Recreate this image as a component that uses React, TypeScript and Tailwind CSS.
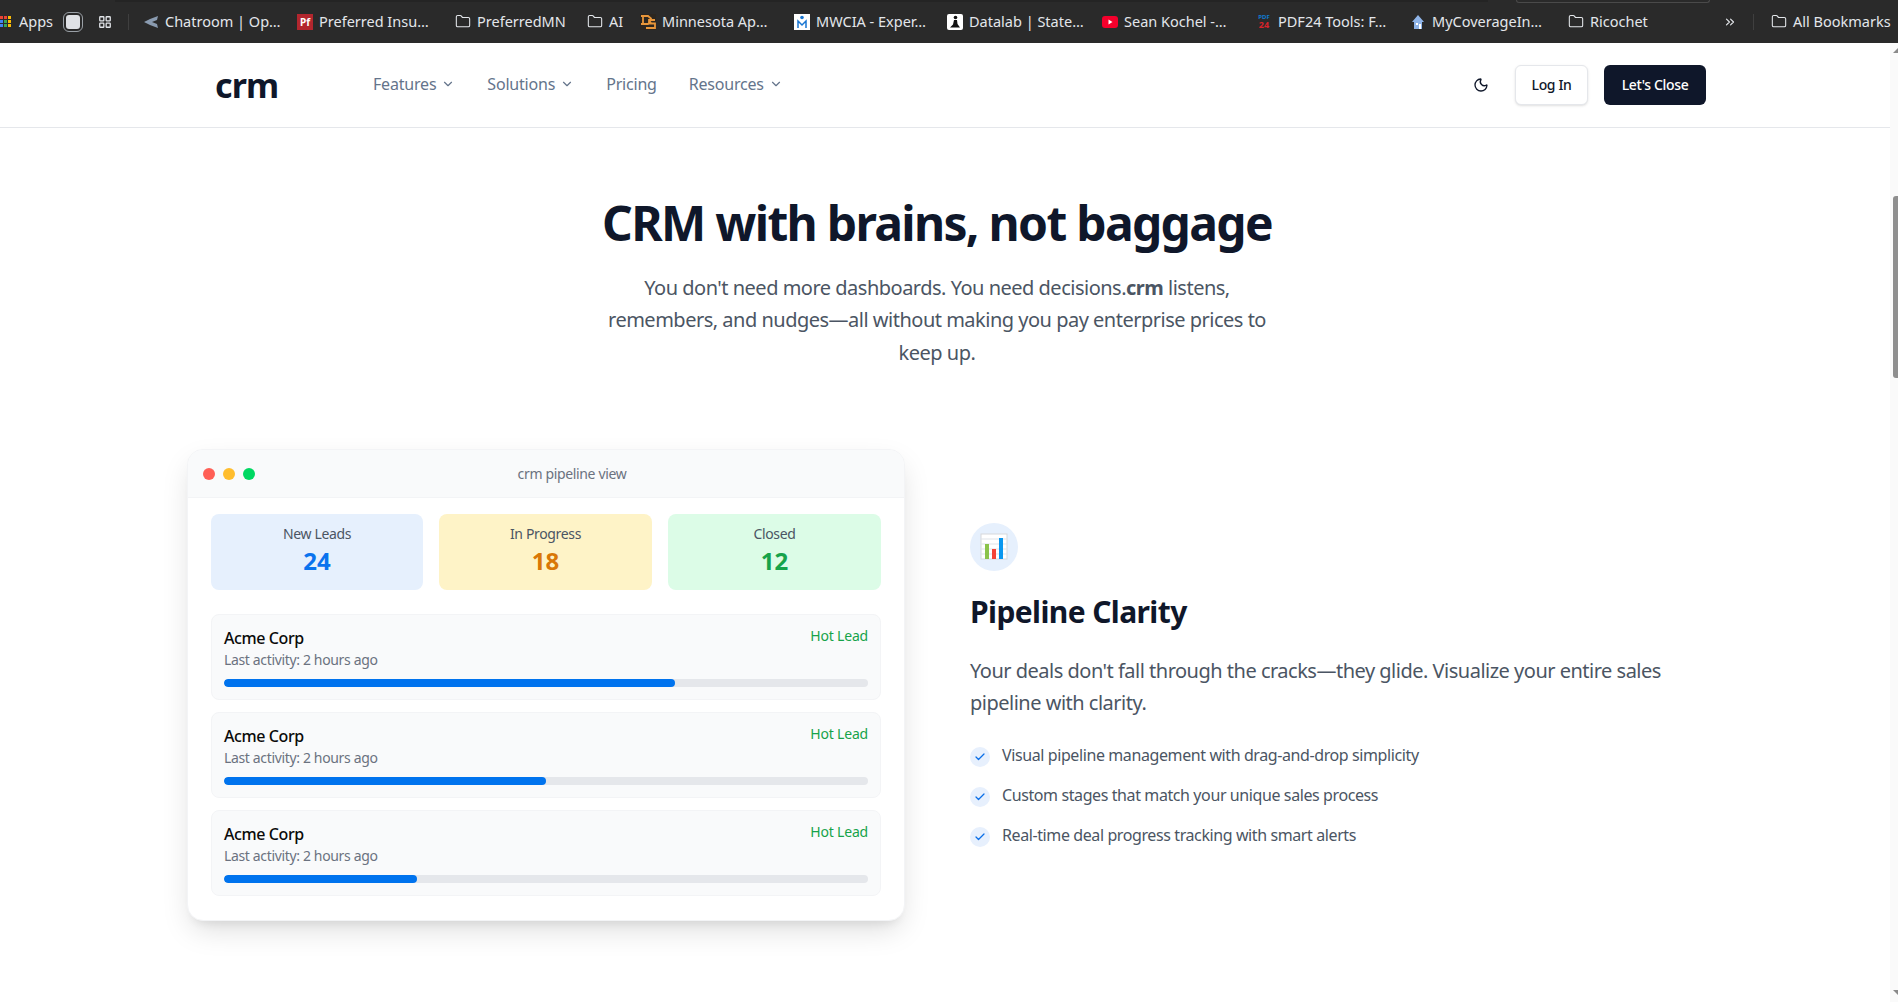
import { Check, ChevronDown, ChevronsRight, Folder, LayoutGrid, Moon } from 'lucide-react';

const font = "font-['Noto_Sans',sans-serif]";

function ChartEmoji() {
  return (
    <svg width="28" height="28" viewBox="0 0 28 28">
      <rect x="1" y="1" width="26" height="25" fill="#fff" stroke="#d5d8dc" />
      <path d="M1 6h26M1 11h26M1 16h26M1 21h26" stroke="#dfe3e8" />
      <rect x="5" y="11" width="4" height="15" fill="#8bc34a" />
      <rect x="12" y="16" width="4" height="10" fill="#f44336" />
      <rect x="19" y="5" width="4" height="21" fill="#0a97ef" />
    </svg>
  );
}

function Bookmark({ icon, label, width }: { icon: React.ReactNode; label: string; width: string }) {
  return (
    <div className={`flex items-center gap-[6px] shrink-0 ${width}`}>
      <span className="w-4 h-4 flex items-center justify-center shrink-0">{icon}</span>
      <span className="text-[14.500px] text-[#e3e6ea] whitespace-nowrap">{label}</span>
    </div>
  );
}

const FolderIcon = () => <Folder size={17} strokeWidth={1.6} className="text-[#e3e6ea]" />;

function BookmarksBar() {
  return (
    <div className="h-[43px] bg-[#2a2a2a] flex items-center shrink-0 relative">
      {/* strip of the browser's tab row and address box above the bookmarks */}
      <div className="absolute top-0 left-[115px] w-[1373px] h-[2px] bg-[#242424]" />
      <div className="absolute top-0 left-[1516px] w-[194px] h-[3px] border-b border-x border-[#4a4a4a] rounded-b-[3px]" />
      <div className="grid grid-cols-3 gap-[1px] w-[11px] h-[11px] mr-[8px]">
        <span className="bg-[#ea4335]" /><span className="bg-[#ea4335]" /><span className="bg-[#fbbc05]" />
        <span className="bg-[#4285f4]" /><span className="bg-[#34a853]" /><span className="bg-[#fbbc05]" />
        <span className="bg-[#4285f4]" /><span className="bg-[#34a853]" /><span className="bg-[#fbbc05]" />
      </div>
      <span className="text-[14.500px] text-[#e3e6ea] w-[44px]">Apps</span>
      <div className="w-5 h-5 rounded-[6px] border border-[#9aa0a6] flex items-center justify-center mr-[15px]">
        <span className="w-[14px] h-[14px] bg-[#dfe1e5] rounded-[3px]" />
      </div>
      <LayoutGrid size={14} strokeWidth={2.2} className="text-[#e3e6ea] mr-[16px]" />
      <div className="w-px h-4 bg-[#3f3f3f] mr-[14px]" />
      <Bookmark
        width="w-[154px]"
        label="Chatroom | Op…"
        icon={<svg width="16" height="14" viewBox="0 0 16 14"><path d="M15 1 7 4 1 7l6 3 8 3-1-4-5-2 5-2z" fill="#8a9bb0" /></svg>}
      />
      <Bookmark
        width="w-[158px]"
        label="Preferred Insu…"
        icon={<span className="w-4 h-4 bg-[#b3262e] text-white text-[10px] leading-none font-bold flex items-center justify-center">Pf</span>}
      />
      <Bookmark width="w-[132px]" label="PreferredMN" icon={<FolderIcon />} />
      <Bookmark width="w-[53px]" label="AI" icon={<FolderIcon />} />
      <Bookmark
        width="w-[154px]"
        label="Minnesota Ap…"
        icon={
          <svg width="16" height="16" viewBox="0 0 16 16">
            <rect width="16" height="16" fill="#2b2620" />
            <path d="M1 2h7l3 2.500V7M3 2v8M1 10h7l3-2.500M15 6H9v3.500h6V14H6" fill="none" stroke="#e8963a" strokeWidth="1.800" />
          </svg>
        }
      />
      <Bookmark
        width="w-[153px]"
        label="MWCIA - Exper…"
        icon={
          <svg width="16" height="16" viewBox="0 0 16 16">
            <rect width="16" height="16" fill="#fff" />
            <circle cx="8" cy="3.500" r="1.800" fill="#1976d2" />
            <path d="M4 14V7l4 4 4-4v7" fill="none" stroke="#1976d2" strokeWidth="1.500" />
          </svg>
        }
      />
      <Bookmark
        width="w-[155px]"
        label="Datalab | State…"
        icon={
          <svg width="16" height="16" viewBox="0 0 16 16">
            <rect width="16" height="16" rx="2" fill="#fff" />
            <circle cx="8.500" cy="3.500" r="1.800" fill="#111" />
            <path d="M7 6h3l.5 4 2.500 3.500H3l3-3z" fill="#111" />
          </svg>
        }
      />
      <Bookmark
        width="w-[154px]"
        label="Sean Kochel -…"
        icon={
          <svg width="16" height="16" viewBox="0 0 16 16">
            <rect y="2" width="16" height="12" rx="3" fill="#f5002c" />
            <path d="m6.500 5.500 4 2.500-4 2.500z" fill="#fff" />
          </svg>
        }
      />
      <Bookmark
        width="w-[154px]"
        label="PDF24 Tools: F…"
        icon={
          <span className="flex flex-col items-center font-bold leading-none">
            <span className="text-[6px] text-[#0f7bd1]">PDF</span>
            <span className="text-[9px] text-[#d8232a]">24</span>
          </span>
        }
      />
      <Bookmark
        width="w-[158px]"
        label="MyCoverageIn…"
        icon={
          <svg width="16" height="16" viewBox="0 0 16 16">
            <path d="M8 1 2 8h2v7h8V8h2z" fill="#8fb4e8" />
            <rect x="6" y="9" width="2" height="2" fill="#fff" />
            <rect x="9" y="10" width="2" height="5" fill="#fff" />
          </svg>
        }
      />
      <Bookmark width="w-[155px]" label="Ricochet" icon={<FolderIcon />} />
      <ChevronsRight size={14} className="text-[#e3e6ea] mr-[16px]" />
      <div className="w-px h-4 bg-[#3f3f3f] mr-[17px]" />
      <Bookmark width="w-auto" label="All Bookmarks" icon={<FolderIcon />} />
    </div>
  );
}

function NavLink({ label, menu }: { label: string; menu?: boolean }) {
  return (
    <div className="flex items-center gap-[5px] text-[16px] tracking-[-0.2px] text-[#64748b]">
      <span>{label}</span>
      {menu && <ChevronDown size={14} strokeWidth={2} />}
    </div>
  );
}

function StatCard({ label, value, bg, color, width }: { label: string; value: string; bg: string; color: string; width: string }) {
  return (
    <div className={`${width} h-[76px] rounded-[8px] ${bg} flex flex-col items-center justify-center pb-[3px]`}>
      <span className="text-[14px] leading-[20px] tracking-tight text-[#4b5563]">{label}</span>
      <span className={`text-[24px] leading-[32px] mt-[1px] font-bold ${color}`}>{value}</span>
    </div>
  );
}

function LeadRow({ progress }: { progress: number }) {
  return (
    <div className="h-[86px] rounded-[8px] bg-[#f9fafb] border border-[#f3f4f6] px-[12px] pt-[11px]">
      <div className="flex justify-between items-start">
        <div>
          <div className="text-[16px] leading-[24px] tracking-tight font-medium text-[#0a0a0a]">Acme Corp</div>
          <div className="text-[14px] leading-[20px] tracking-tight text-[#6b7280]">Last activity: 2 hours ago</div>
        </div>
        <span className="text-[14px] leading-[20px] tracking-[-0.2px] text-[#16a34a]">Hot Lead</span>
      </div>
      <div className="h-2 mt-[9px] rounded-full bg-[#e5e7eb] overflow-hidden">
        <div className="h-full rounded-full bg-[#0073ee]" style={{ width: `${progress}%` }} />
      </div>
    </div>
  );
}

function Feature({ text }: { text: string }) {
  return (
    <li className="flex items-start gap-[12px] h-[24px]">
      <span className="w-5 h-5 mt-[4px] rounded-full bg-[#e7f0fd] flex items-center justify-center shrink-0">
        <Check size={12} strokeWidth={2.5} className="text-[#0a6fe8]" />
      </span>
      <span className="text-[16px] leading-[24px] tracking-tight text-[#4b5563]">{text}</span>
    </li>
  );
}

export default function App() {
  return (
    <div className={`h-[1002px] w-full overflow-hidden bg-white flex flex-col ${font}`}>
      <BookmarksBar />
      <div className="flex flex-1 min-h-0">
        <div className="flex-1 min-w-0">
          {/* nav */}
          <header className="h-[85px] border-b border-[#e5e7eb] flex items-center pl-[215px] pr-[184px]">
            <span className="w-[158px] text-[34px] leading-none font-bold text-[#0f172a] tracking-tight -mt-[1px]">crm</span>
            <nav className="flex items-center gap-[32px] -mt-[2px]">
              <NavLink label="Features" menu />
              <NavLink label="Solutions" menu />
              <NavLink label="Pricing" />
              <NavLink label="Resources" menu />
            </nav>
            <div className="ml-auto flex items-center">
              <Moon size={16} strokeWidth={2} className="text-[#0f172a] mr-[26px]" />
              <button className="w-[73px] h-10 pb-[2px] rounded-[6px] bg-white border border-[#e5e7eb] shadow-sm text-[14px] tracking-tight font-medium text-[#0f172a] mr-[16px]">Log In</button>
              <button className="w-[102px] h-10 pb-[2px] rounded-[6px] bg-[#0f172a] text-[14px] tracking-tight font-medium text-white">Let's Close</button>
            </div>
          </header>

          {/* hero */}
          <section className="pt-[65px] flex flex-col items-center pr-[16px]">
            <h1 className="text-[48px] leading-[60px] tracking-[-1.7px] font-bold text-[#0f172a]">CRM with brains, not baggage</h1>
            <p className="mt-[19px] w-[672px] text-center text-[20px] leading-[32.400px] tracking-tight text-[#4b5563]">
              You don't need more dashboards. You need decisions.<strong className="font-bold">crm</strong> listens, remembers, and nudges—all without making you pay enterprise prices to keep up.
            </p>
          </section>

          {/* pipeline */}
          <section className="mt-[80px] pl-[187px] flex items-start gap-[65px]">
            <div className="w-[718px] h-[472px] rounded-[16px] bg-white border border-[#f3f4f6] shadow-[0_12px_30px_-5px_rgba(0,0,0,0.15),0_8px_10px_-6px_rgba(0,0,0,0.08)] overflow-hidden shrink-0">
              <div className="h-[48px] bg-[#f9fafb] border-b border-[#f3f4f6] flex items-center px-[15px]">
                <div className="flex gap-[8px]">
                  <span className="w-3 h-3 rounded-full bg-[#ff5f56]" />
                  <span className="w-3 h-3 rounded-full bg-[#ffbd2e]" />
                  <span className="w-3 h-3 rounded-full bg-[#00d862]" />
                </div>
                <span className="flex-1 text-center text-[14px] tracking-tight text-[#6b7280] -mt-[1px]">crm pipeline view</span>
              </div>
              <div className="px-[23px] pt-[16px]">
                <div className="flex gap-[16px]">
                  <StatCard width="w-[212px]" label="New Leads" value="24" bg="bg-[#e6f0fd]" color="text-[#0a73ee]" />
                  <StatCard width="w-[213px]" label="In Progress" value="18" bg="bg-[#fef3c7]" color="text-[#d97706]" />
                  <StatCard width="w-[213px]" label="Closed" value="12" bg="bg-[#dcfce7]" color="text-[#16a34a]" />
                </div>
                <div className="mt-[24px] flex flex-col gap-[12px]">
                  <LeadRow progress={70} />
                  <LeadRow progress={50} />
                  <LeadRow progress={30} />
                </div>
              </div>
            </div>

            <div className="w-[718px] mt-[74px]">
              <div className="w-12 h-12 rounded-full bg-[#e6f0fd] flex items-center justify-center">
                <ChartEmoji />
              </div>
              <h2 className="mt-[23px] text-[30px] leading-[36px] tracking-[-0.6px] font-bold text-[#0f172a]">Pipeline Clarity</h2>
              <p className="mt-[25px] w-[718px] text-[20px] leading-[32px] tracking-tight text-[#4b5563]">
                Your deals don't fall through the cracks—they glide. Visualize your entire sales pipeline with clarity.
              </p>
              <ul className="mt-[24px] flex flex-col gap-[16px]">
                <Feature text="Visual pipeline management with drag-and-drop simplicity" />
                <Feature text="Custom stages that match your unique sales process" />
                <Feature text="Real-time deal progress tracking with smart alerts" />
              </ul>
            </div>
          </section>
        </div>

        {/* page scrollbar */}
        <aside className="w-[8px] shrink-0 bg-[#fafafa] flex flex-col items-end pt-[5px] pb-[7px]">
          <div className="w-0 h-0 border-l-[5px] border-b-[5px] border-l-transparent border-b-[#8a8a8a]" />
          <div className="w-[5px] h-[182px] mt-[143px] rounded-l-[3px] bg-[#8f8f8f]" />
          <div className="w-0 h-0 mt-auto border-l-[5px] border-t-[5px] border-l-transparent border-t-[#8a8a8a]" />
        </aside>
      </div>
    </div>
  );
}
